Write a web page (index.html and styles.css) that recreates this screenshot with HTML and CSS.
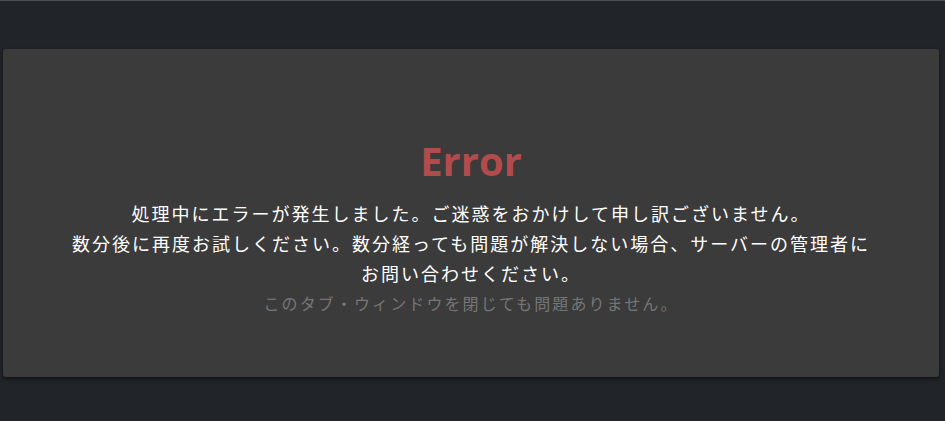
FILE: index.html
```html
<!DOCTYPE html>
<html lang="ja">
<head>
<meta charset="utf-8">
<title>Error</title>
<link rel="stylesheet" href="styles.css">
</head>
<body>
<div class="topline"></div>
<main class="page">
  <section class="card">
    <h1 class="title">Error</h1>
    <p class="msg">処理中にエラーが発生しました。ご迷惑をおかけして申し訳ございません。<br>数分後に再度お試しください。数分経っても問題が解決しない場合、サーバーの管理者にお問い合わせください。</p>
    <p class="note">このタブ・ウィンドウを閉じても問題ありません。</p>
  </section>
</main>
</body>
</html>
```
FILE: styles.css
```css
html, body {
  margin: 0;
  padding: 0;
  height: 100%;
}
body {
  background: #212429;
  font-family: "Noto Sans CJK JP", "Noto Sans", sans-serif;
}
.topline {
  height: 1px;
  background: #4e4f52;
}
.page {
  padding: 48px 6px 0 3px;
}
.card {
  background: #3b3b3b;
  border-radius: 3px;
  box-shadow: 0 2px 4px rgba(0, 0, 0, 0.55);
  padding: 88px 0 59px;
  display: flex;
  flex-direction: column;
  align-items: center;
  text-align: center;
}
.title {
  margin: 0 0 13px;
  font-family: "Open Sans", "Noto Sans", sans-serif;
  font-weight: 700;
  font-size: 40px;
  line-height: 48px;
  height: 48px;
  color: #b24c4c;
}
.msg {
  margin: 0;
  max-width: 810px;
  font-size: 18px;
  letter-spacing: 2px;
  line-height: 30px;
  color: #ffffff;
}
.note {
  margin: 0;
  font-size: 16px;
  letter-spacing: 2.1px;
  line-height: 30px;
  color: #767676;
}
```
